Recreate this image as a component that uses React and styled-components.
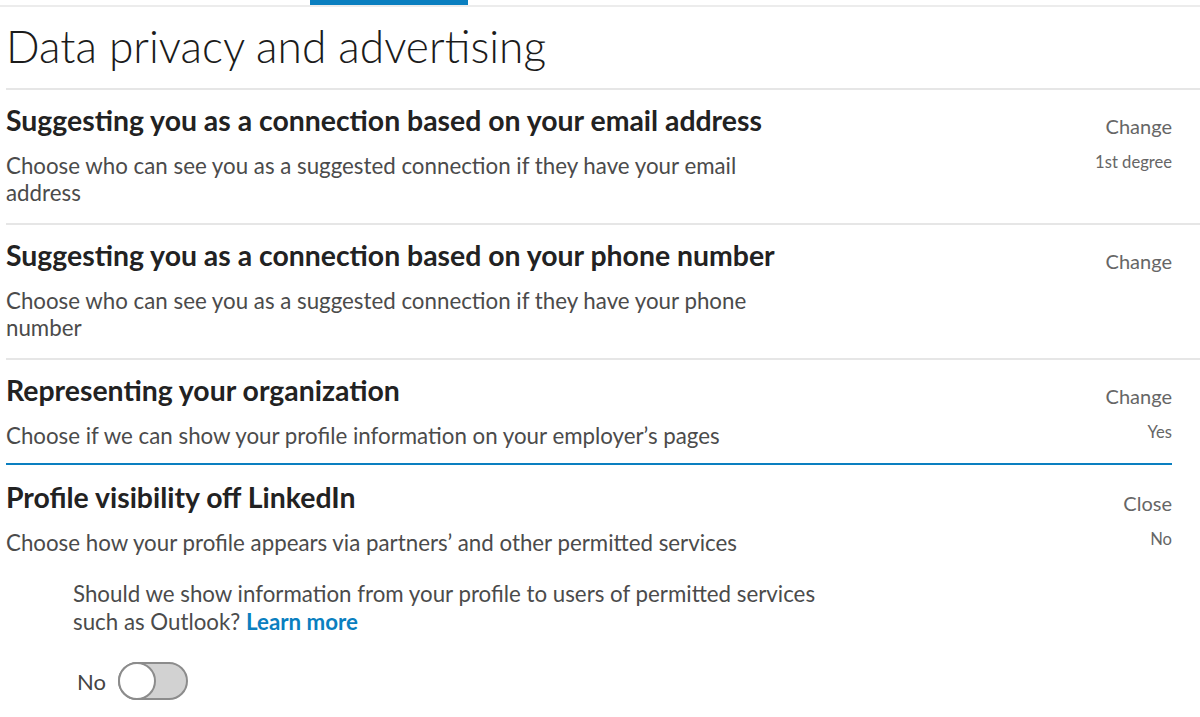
import React from "react";
import styled, { createGlobalStyle } from "styled-components";

const Global = createGlobalStyle`
  html, body { margin: 0; padding: 0; background: #fff; }
  body { font-family: Lato, "Open Sans", sans-serif; -webkit-font-smoothing: antialiased; }
  * { box-sizing: border-box; }
`;

const TabStrip = styled.div`
  display: flex;
  height: 7px;
  border-bottom: 2px solid #ececec;
`;

const ActiveTab = styled.div`
  margin-left: 310px;
  width: 158px;
  height: 5px;
  background: #0a7fc0;
`;

const Page = styled.main`
  padding-left: 6px;
`;

const Heading = styled.h1`
  margin: 0;
  padding: 13px 0 16px;
  font-weight: 300;
  font-size: 44.3px;
  line-height: 52px;
  color: #1b1b1b;
`;

const Section = styled.section`
  display: grid;
  grid-template-columns: 1fr auto;
  column-gap: 24px;
  padding: ${(p) => p.$pad};
  border-top: 2px solid ${(p) => (p.$active ? "#0a7fc0" : "#e6e6e6")};
  margin-right: ${(p) => (p.$active ? "28px" : "0")};
`;

const Main = styled.div`
  min-width: 0;
`;

const Title = styled.h2`
  margin: 0;
  font-weight: 700;
  font-size: 28.4px;
  line-height: 36px;
  color: #222;
`;

const Desc = styled.p`
  margin: 14px 0 0;
  max-width: 760px;
  font-size: 22.3px;
  line-height: 27px;
  color: #4b4b4b;
`;

const Side = styled.div`
  display: flex;
  flex-direction: column;
  align-items: flex-end;
  padding-top: 11px;
`;

const Action = styled.button`
  border: 0;
  background: none;
  padding: 0;
  font-family: inherit;
  font-size: 20px;
  line-height: 26px;
  color: #666;
  cursor: pointer;
`;

const Value = styled.span`
  margin-top: 13px;
  font-size: 16.6px;
  line-height: 20px;
  color: #666;
`;

const Expanded = styled.div`
  grid-column: 1 / -1;
  padding: 24px 0 0 67px;
`;

const Question = styled.p`
  margin: 0;
  max-width: 770px;
  font-size: 22.3px;
  line-height: 28px;
  color: #4b4b4b;
`;

const Link = styled.a`
  color: #0a7fc0;
  font-weight: 700;
  text-decoration: none;
`;

const ToggleRow = styled.div`
  display: flex;
  align-items: center;
  gap: 12px;
  margin-top: 26px;
  padding-left: 4px;
`;

const ToggleLabel = styled.span`
  font-size: 22px;
  color: #444;
`;

const Track = styled.span`
  display: flex;
  align-items: center;
  width: 70px;
  height: 38px;
  border-radius: 19px;
  background: #d2d2d2;
  border: 2px solid #8c8c8c;
`;

const Knob = styled.span`
  width: 38px;
  height: 38px;
  margin-left: -2px;
  border-radius: 50%;
  background: #fff;
  border: 2px solid #8c8c8c;
`;

const rows = [
  {
    title: "Suggesting you as a connection based on your email address",
    desc: "Choose who can see you as a suggested connection if they have your email address",
    action: "Change",
    value: "1st degree",
    pad: "12px 28px 17px 0",
  },
  {
    title: "Suggesting you as a connection based on your phone number",
    desc: "Choose who can see you as a suggested connection if they have your phone number",
    action: "Change",
    pad: "12px 28px 17px 0",
  },
  {
    title: "Representing your organization",
    desc: "Choose if we can show your profile information on your employer’s pages",
    action: "Change",
    value: "Yes",
    pad: "12px 28px 14px 0",
  },
];

export default function App() {
  return (
    <>
      <Global />
      <TabStrip>
        <ActiveTab />
      </TabStrip>
      <Page>
        <Heading>Data privacy and advertising</Heading>
        {rows.map((r) => (
          <Section key={r.title} $pad={r.pad}>
            <Main>
              <Title>{r.title}</Title>
              <Desc>{r.desc}</Desc>
            </Main>
            <Side>
              <Action>{r.action}</Action>
              {r.value && <Value>{r.value}</Value>}
            </Side>
          </Section>
        ))}
        <Section $active $pad="14px 0 0 0">
          <Main>
            <Title>Profile visibility off LinkedIn</Title>
            <Desc>Choose how your profile appears via partners’ and other permitted services</Desc>
          </Main>
          <Side>
            <Action>Close</Action>
            <Value>No</Value>
          </Side>
          <Expanded>
            <Question>
              Should we show information from your profile to users of permitted services
              such as Outlook? <Link href="#">Learn more</Link>
            </Question>
            <ToggleRow>
              <ToggleLabel>No</ToggleLabel>
              <Track>
                <Knob />
              </Track>
            </ToggleRow>
          </Expanded>
        </Section>
      </Page>
    </>
  );
}
